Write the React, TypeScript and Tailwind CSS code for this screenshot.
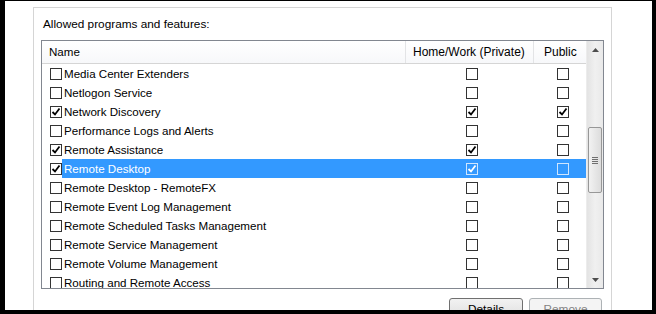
import React from "react";

type Row = { name: string; a: boolean; b: boolean; c: boolean; sel?: boolean };

const rows: Row[] = [
  { name: "Media Center Extenders", a: false, b: false, c: false },
  { name: "Netlogon Service", a: false, b: false, c: false },
  { name: "Network Discovery", a: true, b: true, c: true },
  { name: "Performance Logs and Alerts", a: false, b: false, c: false },
  { name: "Remote Assistance", a: true, b: true, c: false },
  { name: "Remote Desktop", a: true, b: true, c: false, sel: true },
  { name: "Remote Desktop - RemoteFX", a: false, b: false, c: false },
  { name: "Remote Event Log Management", a: false, b: false, c: false },
  { name: "Remote Scheduled Tasks Management", a: false, b: false, c: false },
  { name: "Remote Service Management", a: false, b: false, c: false },
  { name: "Remote Volume Management", a: false, b: false, c: false },
  { name: "Routing and Remote Access", a: false, b: false, c: false },
];

function Box({ checked, light }: { checked: boolean; light?: boolean }) {
  return (
    <div
      className={
        "w-[12px] h-[12px] border flex items-center justify-center shrink-0 " +
        (light ? "border-[#cfe6ff]" : "border-[#333333] bg-white")
      }
    >
      {checked && (
        <svg width="10" height="10" viewBox="0 0 10 10">
          <path
            d="M1.5 5 L4 7.5 L8.5 1.5"
            fill="none"
            stroke={light ? "#ffffff" : "#000000"}
            strokeWidth="1.8"
          />
        </svg>
      )}
    </div>
  );
}

export default function App() {
  return (
    <div
      className="w-[656px] h-[314px] bg-black pl-[5px] pr-[4px] pt-[1px] pb-[4px]"
      style={{ fontFamily: '"Liberation Sans", Arial, sans-serif' }}
    >
      <div className="w-full h-full bg-white overflow-hidden pl-[28px] pt-[6px]">
        <div className="w-[579px] h-[400px] border border-[#d5d5d5] pl-[7px] pt-[9px]">
          <div className="ml-[2px] h-[15px] leading-[15px] text-[11.8px] text-black mb-[8px]">
            Allowed programs and features:
          </div>
          <div className="w-[563px] h-[249px] border border-[#828790] flex text-[11.6px] text-black">
            <div className="w-[544px] flex flex-col overflow-hidden">
              <div className="h-[23px] shrink-0 flex border-b border-[#d5d5d5] bg-gradient-to-b from-white to-[#f7f8fa]">
                <div className="w-[364px] pl-[7px] flex items-center border-r border-[#e3e4e6]">Name</div>
                <div className="w-[128px] pl-[7px] flex items-center border-r border-[#e3e4e6] text-[12px]">Home/Work (Private)</div>
                <div className="w-[52px] pl-[10px] flex items-center text-[12px]">Public</div>
              </div>
              {rows.map((r) => (
                <div key={r.name} className="h-[19px] shrink-0 flex items-center">
                  <div className="w-[20px] pl-[8px] flex items-center">
                    <Box checked={r.a} />
                  </div>
                  <div
                    className={
                      "h-full flex-1 flex items-center " +
                      (r.sel ? "bg-[#3399ff] text-white" : "")
                    }
                  >
                    <div className="w-[343px] pl-[2px] whitespace-nowrap">{r.name}</div>
                    <div className="w-[128px] pl-[61px] flex items-center">
                      <Box checked={r.b} light={r.sel} />
                    </div>
                    <div className="w-[52px] pl-[24px] flex items-center">
                      <Box checked={r.c} light={r.sel} />
                    </div>
                  </div>
                </div>
              ))}
            </div>
            <div className="w-[17px] h-full flex flex-col bg-gradient-to-r from-[#e3e3e3] via-[#f0f0f0] to-[#e9e9e9] border-l border-[#ececec]">
              <div className="h-[17px] flex items-center justify-center">
                <svg width="7" height="4" viewBox="0 0 7 4">
                  <path d="M0 4 L3.5 0 L7 4 Z" fill="#4d4d4d" />
                </svg>
              </div>
              <div className="h-[69px]" />
              <div className="mx-[1px] h-[66px] rounded-[2px] border border-[#979797] bg-gradient-to-r from-[#f2f2f2] to-[#dcdcdc] flex flex-col items-center justify-center gap-[1px]">
                <div className="w-[6px] h-[1px] bg-[#6f6f6f]" />
                <div className="w-[6px] h-[1px] bg-[#6f6f6f]" />
                <div className="w-[6px] h-[1px] bg-[#6f6f6f]" />
                <div className="w-[6px] h-[1px] bg-[#6f6f6f]" />
              </div>
              <div className="flex-1" />
              <div className="h-[17px] flex items-center justify-center">
                <svg width="7" height="4" viewBox="0 0 7 4">
                  <path d="M0 0 L3.5 4 L7 0 Z" fill="#4d4d4d" />
                </svg>
              </div>
            </div>
          </div>
          <div className="w-[561px] flex justify-end gap-[6px] mt-[9px] text-[11.8px]">
            <div className="w-[74px] h-[23px] rounded-[3px] border border-[#707070] bg-gradient-to-b from-[#f2f2f2] to-[#dddddd] flex items-center justify-center text-black">
              Details
            </div>
            <div className="w-[73px] h-[23px] rounded-[3px] border border-[#adb2b5] bg-[#f4f4f4] flex items-center justify-center text-[#838383]">
              Remove
            </div>
          </div>
        </div>
      </div>
    </div>
  );
}
